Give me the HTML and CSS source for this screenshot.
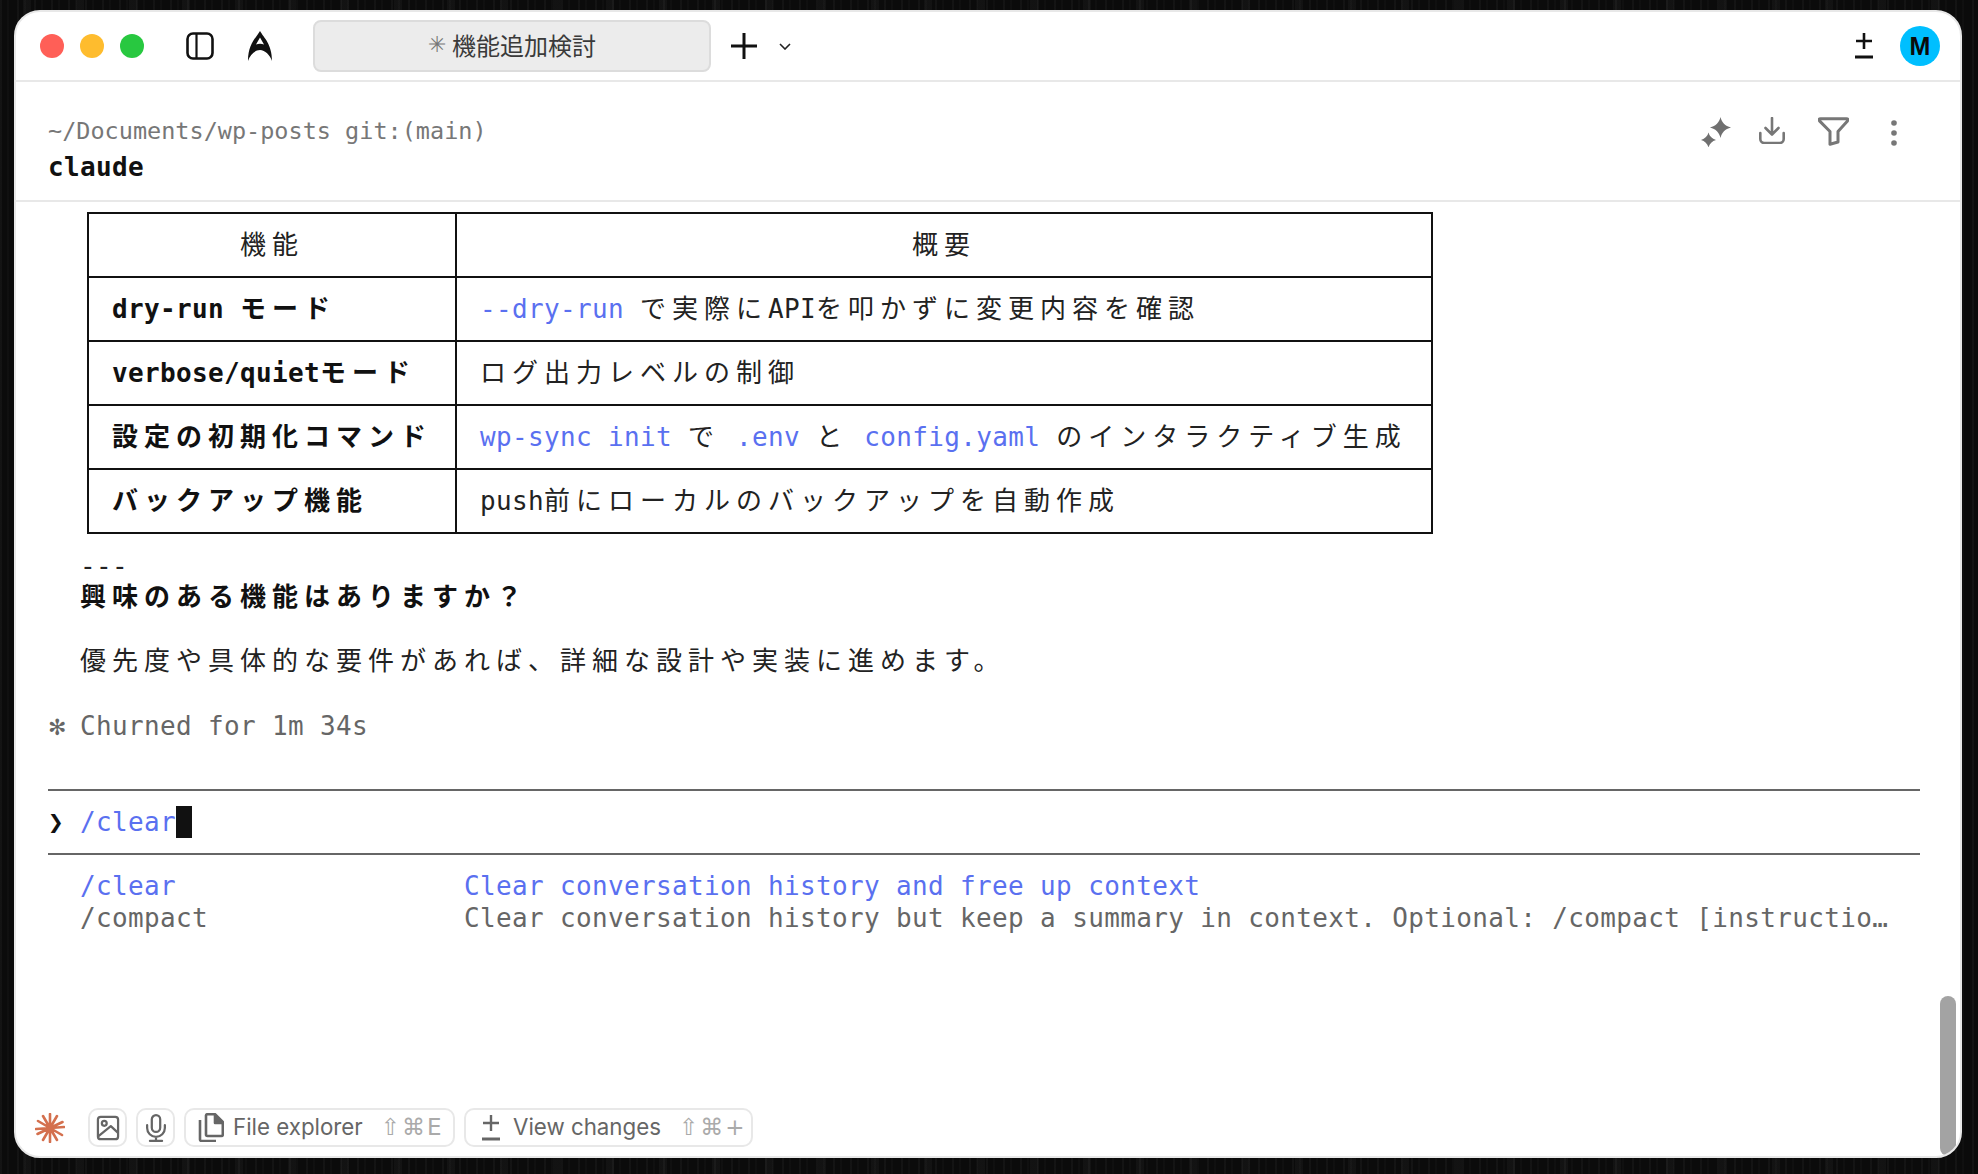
FILE: index.html
```html
<!DOCTYPE html>
<html lang="ja">
<head>
<meta charset="utf-8">
<title>機能追加検討</title>
<link rel="stylesheet" href="styles.css">
</head>
<body>
<div class="window">
  <header class="titlebar">
    <span class="light red"></span><span class="light yellow"></span><span class="light green"></span>
    <svg class="ic-sidebar" width="28" height="28" viewBox="0 0 28 28"><rect x="1.5" y="1.5" width="25" height="25" rx="5.5" fill="none" stroke="#111" stroke-width="2.6"/><path d="M10.5 2v24" stroke="#111" stroke-width="2.2"/></svg>
    <svg class="ic-logo" width="24" height="30" viewBox="0 0 24 30"><path fill="#111" fill-rule="evenodd" d="M12 0C16 7 24 13 24 30C22 24 17 19 12 19C7 19 2 24 0 30C0 13 8 7 12 0ZM12 6.500L8 13.500C10.500 12.500 13.500 12.500 16 13.500Z"/></svg>
    <div class="tab"><span class="tab-star">✳</span> 機能追加検討</div>
    <svg class="ic-plus" width="26" height="26" viewBox="0 0 26 26"><path d="M13 0v26M0 13h26" stroke="#111" stroke-width="3"/></svg>
    <svg class="ic-chev" width="12" height="7" viewBox="0 0 12 7"><path d="M1 1l5 5 5-5" fill="none" stroke="#222" stroke-width="1.6"/></svg>
    <svg class="ic-pm" width="18" height="26" viewBox="0 0 18 26"><path d="M9 0v16M1 8h16" stroke="#111" stroke-width="2.600"/><path d="M0 24h18" stroke="#111" stroke-width="3"/></svg>
    <div class="avatar">M</div>
  </header>

  <section class="cmdhead">
    <div class="cmdtext">
      <div class="path">~/Documents/wp-posts git:(main)</div>
      <div class="cmd">claude</div>
    </div>
    <svg class="ic-spark" width="30" height="30" viewBox="0 0 30 30"><path fill="#707070" d="M19.500 0C20.800 5.500 24 9 30 10.500C24 12 20.800 15.500 19.500 21C18.200 15.500 15 12 9 10.500C15 9 18.200 5.500 19.500 0Z"/><path fill="#707070" d="M7.500 15.500C8.300 19 11 21.800 15 23C11 24.200 8.300 27 7.500 30.500C6.700 27 4 24.200 0 23C4 21.800 6.700 19 7.500 15.500Z"/></svg>
    <svg class="ic-down" width="26" height="27" viewBox="0 0 26 27" fill="none" stroke="#777" stroke-width="2.600" stroke-linecap="round" stroke-linejoin="round"><path d="M13 1v16M6.500 11L13 17.500 19.500 11"/><path d="M1.300 16v6a4 4 0 0 0 4 4h15.400a4 4 0 0 0 4-4v-6"/></svg>
    <svg class="ic-filter" width="31" height="29" viewBox="0 0 31 29" fill="none" stroke="#777" stroke-width="3" stroke-linejoin="round"><path d="M2.500 1.700h26c1.500 0 1.800 1.200 1 2.200L20 14.500v10.500L12 27.300V14.500L1.500 3.900c-.8-1-.5-2.200 1-2.200Z"/></svg>
    <svg class="ic-dots" width="6" height="26" viewBox="0 0 6 26"><circle cx="3" cy="3" r="2.800" fill="#777"/><circle cx="3" cy="13" r="2.800" fill="#777"/><circle cx="3" cy="23" r="2.800" fill="#777"/></svg>
  </section>

  <main class="term">
    <table class="grid">
      <colgroup><col class="col-a"><col class="col-b"></colgroup>
      <thead>
        <tr><th><span class="j">機能</span></th><th><span class="j">概要</span></th></tr>
      </thead>
      <tbody>
        <tr>
          <td class="strong">dry-run <span class="j">モード</span></td>
          <td><span class="code">--dry-run</span> <span class="j">で実際に</span>API<span class="j">を叩かずに変更内容を確認</span></td>
        </tr>
        <tr>
          <td class="strong">verbose/quiet<span class="j">モード</span></td>
          <td><span class="j">ログ出力レベルの制御</span></td>
        </tr>
        <tr>
          <td class="strong"><span class="j">設定の初期化コマンド</span></td>
          <td><span class="code">wp-sync init</span> <span class="j">で</span> <span class="code">.env</span> <span class="j">と</span> <span class="code">config.yaml</span> <span class="j">のインタラクティブ生成</span></td>
        </tr>
        <tr>
          <td class="strong"><span class="j">バックアップ機能</span></td>
          <td>push<span class="j">前にローカルのバックアップを自動作成</span></td>
        </tr>
      </tbody>
    </table>

    <div class="line indent dash">---</div>
    <div class="line indent strong"><span class="j">興味のある機能はありますか？</span></div>
    <div class="line blank"></div>
    <div class="line indent"><span class="j">優先度や具体的な要件があれば、詳細な設計や実装に進めます。</span></div>
    <div class="line blank"></div>
    <div class="line muted"><span class="spin">✻</span> Churned for 1m 34s</div>
    <div class="line blank"></div>
    <div class="rule-row"><div class="rule"></div></div>
    <div class="line prompt"><span class="caret">❯</span> <span class="code">/clear</span><span class="cursor"></span></div>
    <div class="rule-row"><div class="rule"></div></div>
    <div class="cmdrow line indent code"><span>/clear</span><span>Clear conversation history and free up context</span></div>
    <div class="cmdrow line indent muted"><span>/compact</span><span>Clear conversation history but keep a summary in context. Optional: /compact [instructio…</span></div>
  </main>

  <footer class="bar">
    <svg class="ic-claude" width="30" height="30" viewBox="-15 -15 30 30" stroke="#d4704e" stroke-width="2.600" stroke-linecap="round"><path d="M0 -14L0 14M-14 1L14 -1M-7 -12L7 12M-7 12L7 -12M-12 -7L12 7M-12.500 6L12.500 -6"/></svg>
    <button class="btn square"><svg width="24" height="30" viewBox="0 0 24 30" fill="none" stroke="#666" stroke-width="2.400" stroke-linejoin="round"><rect x="1.200" y="3" width="21.600" height="24" rx="3"/><circle cx="8" cy="10" r="2.600"/><path d="M1.500 24L15 13l7.500 7"/></svg></button>
    <button class="btn square"><svg width="22" height="30" viewBox="0 0 22 30" fill="none" stroke="#666" stroke-width="2.400" stroke-linecap="round"><rect x="6.500" y="1.200" width="9" height="18" rx="4.500"/><path d="M1.500 12v3a9.500 9.500 0 0 0 19 0v-3M11 24.500v3.500M4.500 28.800h13"/></svg></button>
    <button class="btn wide files"><svg width="26" height="29" viewBox="0 0 26 29" fill="none" stroke="#666" stroke-width="2.600" stroke-linejoin="round"><path d="M8 2.500a1.500 1.500 0 0 1 1.500-1.300H17L24.800 9v12.500a1.500 1.500 0 0 1-1.500 1.500H9.500A1.500 1.500 0 0 1 8 21.500Z"/><path d="M17 1v9h8" fill="#666"/><path d="M2 7v19.500A1.500 1.500 0 0 0 3.500 28H18"/></svg><span class="label">File explorer</span><span class="keys">⇧⌘E</span></button>
    <button class="btn wide changes"><svg width="18" height="26" viewBox="0 0 18 26"><path d="M9 0v16M1 8h16" stroke="#666" stroke-width="2.400"/><path d="M0 24h18" stroke="#666" stroke-width="3"/></svg><span class="label">View changes</span><span class="keys">⇧⌘+</span></button>
  </footer>

  <div class="scrollthumb"></div>
</div>
</body>
</html>
```
FILE: styles.css
```css
* { box-sizing: border-box; }
html, body { height: 100%; }
body {
  margin: 0;
  overflow: hidden;
  padding: 10px 16px 16px 14px;
  background-color: #0b0b0b;
  background-image:
    repeating-linear-gradient(90deg, rgba(255,255,255,.035) 0 2px, transparent 2px 7px, rgba(255,255,255,.02) 7px 9px, transparent 9px 17px),
    repeating-linear-gradient(90deg, transparent 0 23px, rgba(255,255,255,.03) 23px 31px, transparent 31px 53px);
}
.window {
  position: relative;
  height: 1148px;
  display: flex;
  flex-direction: column;
  background: #fff;
  border: 2px solid #e8e8e8;
  border-radius: 26px;
  overflow: hidden;
  color: #1c1c1c;
}

.titlebar {
  height: 70px;
  flex: none;
  display: flex;
  align-items: center;
  padding: 0 20px 0 24px;
  border-bottom: 2px solid #e8e8e8;
}
.light { width: 24px; height: 24px; border-radius: 50%; margin-right: 16px; }
.red { background: #ff5f57; }
.yellow { background: #febc2e; }
.green { background: #28c840; margin-right: 0; }
.ic-sidebar { margin-left: 42px; }
.ic-logo { margin-left: 34px; }
.tab {
  width: 398px;
  height: 52px;
  margin-left: 41px;
  padding-bottom: 3px;
  display: flex;
  align-items: center;
  justify-content: center;
  background: #ececec;
  border: 2px solid #dcdcdc;
  border-radius: 8px;
  font: 24px/1 "Noto Sans CJK JP", sans-serif;
  color: #3a3a3a;
  white-space: pre;
}
.tab-star { font-family: "DejaVu Sans", sans-serif; font-size: 22px; color: #777; }
.ic-plus { margin-left: 20px; }
.ic-chev { margin-left: 22px; }
.ic-pm { margin-left: auto; }
.avatar {
  width: 40px;
  height: 40px;
  margin-left: 27px;
  border-radius: 50%;
  background: #00bfff;
  color: #0a0a0a;
  font: 700 25px/40px "Liberation Sans", sans-serif;
  text-align: center;
}

.cmdhead {
  height: 120px;
  flex: none;
  display: flex;
  align-items: flex-start;
  padding: 33px 63px 0 32px;
  border-bottom: 2px solid #e8e8e8;
}
.cmdtext { margin-right: auto; }
.path {
  font: 23.5px/32px "DejaVu Sans Mono", monospace;
  color: #777;
}
.cmd {
  margin-top: 4px;
  font: 700 26px/32px "DejaVu Sans Mono", monospace;
  letter-spacing: .35px;
  color: #111;
}
.ic-spark, .ic-down, .ic-filter { margin-top: 2px; }
.ic-spark { margin-left: 0; }
.ic-down { margin-left: 28px; }
.ic-filter { margin-left: 33px; }
.ic-dots { margin-left: 42px; margin-top: 5px; }

.term {
  flex: 1;
  min-height: 0;
  padding: 10px 40px 0 32px;
  font: 26px/32px "DejaVu Sans Mono", "Noto Sans CJK JP", monospace;
  letter-spacing: .35px;
  color: #222;
}
.j {
  font-family: "Noto Sans CJK JP", sans-serif;
  letter-spacing: 6px;
  line-height: 0;
  vertical-align: 1px;
}
.grid .j { vertical-align: 0; }
.grid {
  width: 1346px;
  margin-left: 39px;
  table-layout: fixed;
  border-collapse: collapse;
  border: 2px solid #111;
}
.col-a { width: 368px; }
.grid th, .grid td {
  height: 64px;
  padding: 0 0 0 23px;
  border: 2px solid #111;
  font-weight: 400;
  white-space: nowrap;
  line-height: 32px;
}
.grid th { padding: 0; text-align: center; }
.grid td.strong { font-weight: 700; color: #111; }
.code { color: #5a70f0; }

.line { height: 32px; line-height: 32px; white-space: pre; }
.indent { padding-left: 32px; }
.dash { margin-top: 16px; }
.strong { font-weight: 700; color: #111; }
.muted { color: #666; }
.spin { display: inline-block; width: 16px; font-family: "DejaVu Sans", sans-serif; font-size: 22px; letter-spacing: 0; }
.rule-row { height: 32px; display: flex; align-items: center; }
.rule { flex: 1; height: 2px; background: #666; }
.caret { color: #111; }
.cursor {
  display: inline-block;
  width: 16px;
  height: 32px;
  vertical-align: top;
  background: #111;
}
.cmdrow { display: grid; grid-template-columns: 384px 1fr; }

.bar {
  flex: none;
  display: flex;
  align-items: center;
  gap: 9px;
  padding: 0 0 9px 19px;
}
.ic-claude { margin-right: 14px; }
.btn {
  height: 39px;
  display: flex;
  align-items: center;
  justify-content: center;
  padding: 0;
  background: #fff;
  border: 2px solid #e8e8e8;
  border-radius: 10px;
  font: 22.3px/1 Inter, "Liberation Sans", sans-serif;
  color: #666;
}
.square { width: 39px; }
.square svg { height: 28px; }
.files { width: 271px; justify-content: flex-start; padding-left: 12px; }
.changes { width: 289px; justify-content: flex-start; padding-left: 16px; }
.label { margin-left: 9px; white-space: nowrap; }
.changes .label { margin-left: 13px; }
.keys {
  margin-left: 18px;
  font: 23px/1 "DejaVu Sans", sans-serif;
  letter-spacing: 2px;
  color: #aaa;
  white-space: nowrap;
}

.scrollthumb {
  position: absolute;
  right: 4px;
  bottom: 0;
  width: 16px;
  height: 160px;
  border-radius: 8px;
  background: #a3a3a3;
}
```
